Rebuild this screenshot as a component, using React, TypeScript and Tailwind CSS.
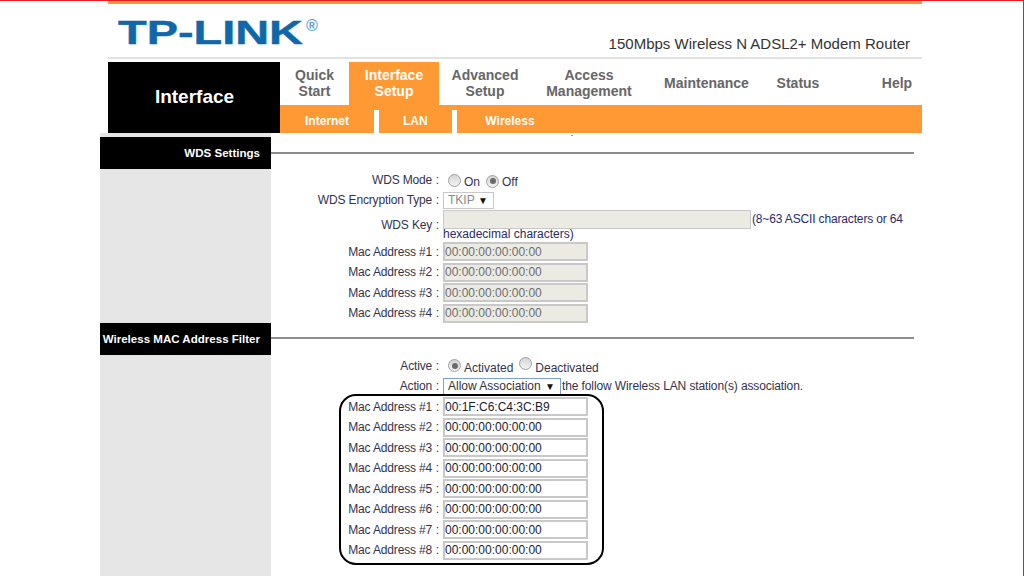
const tabs = [
  { l: ["Quick", "Start"], w: "w-[69px]" },
  { l: ["Interface", "Setup"], w: "w-[90px]", active: true },
  { l: ["Advanced", "Setup"], w: "w-[92px]" },
  { l: ["Access", "Management"], w: "w-[116px]" },
  { l: ["Maintenance"], w: "w-[119px]" },
  { l: ["Status"], w: "w-[64px]" },
  { l: ["Help"], w: "w-[92px] pl-[42px]" },
];

function Radio({ on }: { on?: boolean }) {
  return (
    <span className="inline-flex w-[13px] h-[13px] rounded-full border border-[#a0a0a0] bg-gradient-to-b from-[#d4d4d4] to-[#f4f4f4] items-center justify-center shrink-0">
      {on && <span className="w-[6px] h-[6px] rounded-full bg-[#6a6a6a]" />}
    </span>
  );
}

function Label({ t }: { t: string }) {
  return (
    <div className="w-[168px] text-right shrink-0 whitespace-pre tracking-[-0.15px]">
      {t}
      <span className="ml-[0.5px]"> :</span>
    </div>
  );
}

function Mac({ n, value, off }: { n: number; value?: string; off?: boolean }) {
  return (
    <div className="flex items-center h-[20.45px]">
      <Label t={`Mac Address #${n}`} />
      <input
        readOnly
        value={value ?? "00:00:00:00:00:00"}
        className={
          off
            ? "ml-[4px] w-[145px] h-[19px] px-0 border-2 border-[#c8c8c8] bg-[#ebebe4] text-[#6d6d6d] text-[12px] outline-none"
            : "ml-[4px] w-[145px] h-[19px] px-0 border-2 border-[#c8c8c8] bg-white text-[#1a1a2e] text-[12px] outline-none"
        }
      />
    </div>
  );
}

function Head({ t, h }: { t: string; h: string }) {
  return (
    <div className={`${h} bg-black text-white font-bold text-[11.55px] flex items-center justify-end pr-[11px] pt-[1px] whitespace-nowrap`}>
      {t}
    </div>
  );
}

export default function App() {
  return (
    <div className="relative w-[1024px] h-[576px] overflow-hidden bg-white font-['Liberation_Sans',Arial,sans-serif] text-[12px] text-[#33334d]">
      {/* screenshot frame, drawn over the page */}
      <div className="absolute inset-x-0 top-0 h-px bg-[#ed1c24]" />
      <div className="absolute right-0 inset-y-0 w-px bg-[#ed1c24]" />
      <div className="absolute left-[571px] top-[135px] w-[2px] h-px bg-[#9a9a9a]" />

      <div className="ml-[108px] w-[814px]">
        <div className="h-[4px] bg-[#ff9933] border-t border-[#f0501e]" />
        <div className="h-[53px] flex justify-between relative">
          <div className="ml-[10px] mt-[10px] h-[36px] flex items-start">
            <span className="text-[#0f68a9] font-bold text-[33.5px] leading-[38px] origin-left scale-x-[1.4] inline-block w-[188px] whitespace-nowrap [-webkit-text-stroke:0.4px_#0f68a9]">
              TP-LINK
            </span>
            <span className="text-[#5b9fd0] font-bold text-[16px] leading-[13px] mt-[5px]">®</span>
          </div>
          <div className="mt-[32px] mr-[12px] text-[15px] leading-[16px] text-[#333] whitespace-nowrap">
            150Mbps Wireless N ADSL2+ Modem Router
          </div>
        </div>
        <div className="h-[2px] bg-[#e2e2e2]" />
        <div className="h-[3px]" />
        <div className="flex h-[71px]">
          <div className="w-[172px] bg-black text-white font-bold text-[19px] flex items-center justify-center pl-[1px] pb-[1px]">
            Interface
          </div>
          <div className="w-[642px] flex flex-col">
            <div className="flex h-[43px]">
              {tabs.map((t) => (
                <div
                  key={t.l[0]}
                  className={`${t.w} ${t.active ? "bg-[#ff9933] text-white" : "text-[#666666]"} flex flex-col items-center justify-center font-bold text-[14px] leading-[15.5px]`}
                >
                  {t.l.map((x) => (
                    <span key={x}>{x}</span>
                  ))}
                </div>
              ))}
            </div>
            <div className="flex h-[28px] bg-[#ff9933] text-white font-bold text-[12px]">
              <div className="w-[94px] text-center pt-[9px] leading-[14px]">Internet</div>
              <div className="w-[4.5px] mt-[5px] bg-white" />
              <div className="w-[73.5px] text-center pt-[9px] leading-[14px]">LAN</div>
              <div className="w-[4.5px] mt-[5px] bg-white" />
              <div className="w-[107px] text-center pt-[9px] leading-[14px]">Wireless</div>
            </div>
          </div>
        </div>
      </div>

      <div className="ml-[100px] flex">
        <div className="w-[171px] shrink-0 h-[443px] bg-[#e6e6e6] flex flex-col pt-[4px]">
          <Head t="WDS Settings" h="h-[32px]" />
          <div className="h-[154px]" />
          <Head t="Wireless MAC Address Filter" h="h-[32px]" />
        </div>

        <div className="w-[643px]">
          <div className="h-[36px] pt-[19px]">
            <div className="h-[2px] bg-[#8c8c8c]" />
          </div>

          <div className="flex items-center h-[22px]">
            <Label t="WDS Mode" />
            <div className="ml-[9px] flex items-center">
              <Radio />
              <span className="ml-[3px] mt-[4px]">On</span>
              <span className="ml-[6px]"><Radio on /></span>
              <span className="ml-[3px] mt-[4px]">Off</span>
            </div>
          </div>
          <div className="flex items-center h-[18px]">
            <Label t="WDS Encryption Type" />
            <div className="ml-[4px] w-[51px] h-[17px] border border-[#c8c8c8] bg-white text-[#8a8a8a] flex items-center justify-between pl-[4px] pr-[5px]">
              TKIP <span className="text-[#111] text-[10px]">▼</span>
            </div>
          </div>
          <div className="flex h-[32.5px]">
            <div className="pt-[9px] leading-[14px]">
              <Label t="WDS Key" />
            </div>
            <div className="ml-[4px] w-[471px] leading-[12px] text-[#2b2b66]">
              <input
                readOnly
                className="inline-block w-[308px] h-[19px] mt-[1px] align-top border border-[#c8c8c8] bg-[#ebebe4] outline-none"
              />
              <span className="inline-block align-top mt-[4px] ml-[1px] leading-[12px] tracking-[-0.15px]">(8~63 ASCII characters or 64</span>
              <div className="leading-[11px]">hexadecimal characters)</div>
            </div>
          </div>
          {[1, 2, 3, 4].map((n) => (
            <Mac key={n} n={n} off />
          ))}

          <div className="h-[31.5px] pt-[14px]">
            <div className="h-[2px] bg-[#8c8c8c]" />
          </div>

          <div className="flex items-center h-[22px]">
            <Label t="Active" />
            <div className="ml-[9px] flex items-center">
              <Radio on />
              <span className="ml-[3px] mt-[4px]">Activated</span>
              <span className="ml-[6px]"><Radio /></span>
              <span className="ml-[3px] mt-[4px]">Deactivated</span>
            </div>
          </div>
          <div className="flex items-center h-[19px] mb-[1px]">
            <Label t="Action" />
            <div className="ml-[4px] w-[118px] h-[17px] border border-[#7da2ce] bg-white text-[#333] flex items-center justify-between pl-[4px] pr-[5px] shrink-0">
              Allow Association <span className="text-[#111] text-[10px]">▼</span>
            </div>
            <span className="ml-[1px] whitespace-nowrap tracking-[-0.11px]">the follow Wireless LAN station(s) association.</span>
          </div>
          <div className="relative">
            <div className="absolute left-[68px] top-[-3px] w-[265px] h-[171px] border-2 border-black rounded-[17px] pointer-events-none" />
            <Mac n={1} value="00:1F:C6:C4:3C:B9" />
            {[2, 3, 4, 5, 6, 7, 8].map((n) => (
              <Mac key={n} n={n} />
            ))}
          </div>
        </div>
      </div>
    </div>
  );
}
